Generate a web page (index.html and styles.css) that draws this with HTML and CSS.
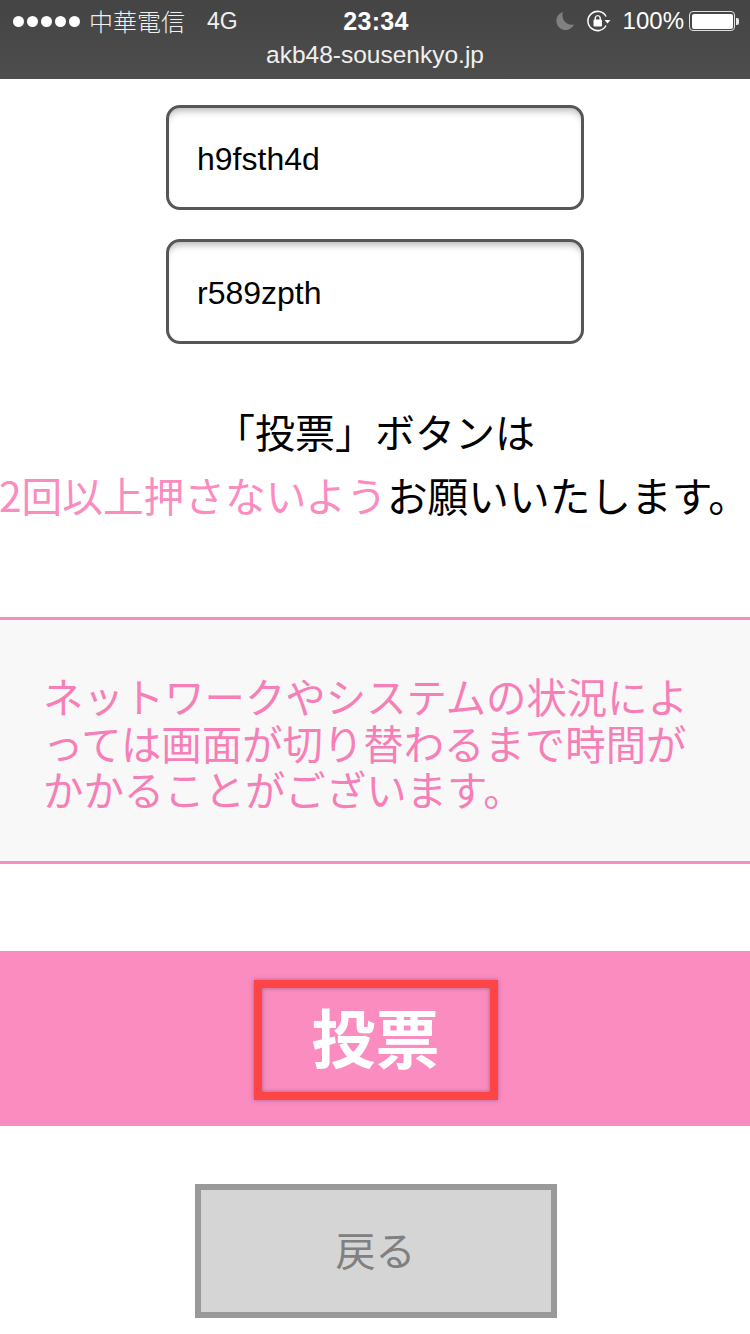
FILE: index.html
```html
<!DOCTYPE html>
<html lang="ja">
<head>
<meta charset="utf-8">
<title>akb48-sousenkyo.jp</title>
<link rel="stylesheet" href="styles.css">
</head>
<body>
<header class="statusbar">
  <div class="status-row">
    <div class="status-left">
      <span class="dots"><i></i><i></i><i></i><i></i><i></i></span>
      <span class="carrier">中華電信</span>
      <span class="network">4G</span>
    </div>
    <div class="clock">23:34</div>
    <div class="status-right">
      <svg class="moon" width="20" height="20" viewBox="0 0 20 20"><path d="M8 1 A9.2 9.2 0 1 0 19 13.5 A9.5 9.5 0 0 1 8 1 Z" fill="#808080"/></svg>
      <svg class="lock" width="24" height="22" viewBox="0 0 24 22"><path d="M19 6.5 A9.6 9.6 0 1 0 19 15.5" fill="none" stroke="#fff" stroke-width="1.5"/><path d="M17.5 10 H23.5 L20.5 13.5 Z" fill="#fff"/><rect x="6.5" y="9.5" width="8.5" height="7" rx="1" fill="#fff"/><path d="M8.3 10 V7.6 A2.5 2.5 0 0 1 13.2 7.6 V10" fill="none" stroke="#fff" stroke-width="1.4"/></svg>
      <span class="percent">100%</span>
      <div class="battery"><div class="battery-fill"></div></div><div class="battery-tip"></div>
    </div>
  </div>
  <div class="url">akb48-sousenkyo.jp</div>
</header>
<main>
  <div class="fields">
    <div class="field">h9fsth4d</div>
    <div class="field">r589zpth</div>
  </div>
  <div class="notice">
    <p class="notice-line">「投票」ボタンは</p>
    <p class="notice-line notice-wide"><span class="pink">2回以上押さないよう</span>お願いいたします。</p>
  </div>
  <section class="panel">
    <p>ネットワークやシステムの状況によ<br>っては画面が切り替わるまで時間が<br>かかることがございます。</p>
  </section>
  <div class="vote-band">
    <button class="vote-btn" type="button">投票</button>
  </div>
  <div class="back-wrap">
    <button class="back-btn" type="button">戻る</button>
  </div>
</main>
</body>
</html>
```
FILE: styles.css
```css
* { box-sizing: border-box; }
html, body { margin: 0; padding: 0; background: #fff; }
body {
  width: 750px;
  height: 1334px;
  overflow: hidden;
  font-family: "Liberation Sans", "Noto Sans CJK JP", sans-serif;
}
.statusbar {
  height: 79px;
  background: linear-gradient(#444444, #4d4d4d);
  color: #fff;
  display: flex;
  flex-direction: column;
  padding-top: 6px;
}
.status-row {
  height: 30px;
  display: grid;
  grid-template-columns: 1fr auto 1fr;
  align-items: center;
  padding: 0 11px 0 13px;
}
.status-left { display: flex; align-items: center; color: #f0f0f0; }
.dots { display: flex; gap: 3px; margin-right: 9px; }
.dots i { width: 11px; height: 11px; border-radius: 50%; background: #fff; display: block; }
.carrier { font-family: "Noto Sans CJK TC", "Noto Sans CJK JP", sans-serif; font-weight: 300; font-size: 24px; line-height: 30px; }
.network { margin-left: 22px; font-size: 23px; }
.clock { font-size: 25px; font-weight: 700; letter-spacing: .3px; }
.status-right { display: flex; align-items: center; justify-content: flex-end; }
.moon { margin-right: 12px; }
.lock { margin-right: 12px; }
.percent { font-size: 24px; margin-right: 5px; }
.battery { width: 46px; height: 20px; border: 1px solid #e0e0e0; border-radius: 4px; padding: 1.5px; }
.battery-fill { width: 100%; height: 100%; background: #fff; border-radius: 2px; }
.battery-tip { width: 3px; height: 7px; background: #e8e8e8; border-radius: 0 2px 2px 0; margin-left: 1px; }
.url { text-align: center; font-size: 24.5px; line-height: 26px; margin-top: 6px; color: #f0f0f0; }

.fields { display: flex; flex-direction: column; align-items: center; gap: 29px; padding-top: 26px; }
.field {
  width: 418px;
  height: 105px;
  border: 3px solid #565656;
  border-radius: 14px;
  padding: 3px 0 0 28px;
  display: flex;
  align-items: center;
  font-size: 32px;
  color: #000;
  box-shadow: inset 0 7px 7px -4px rgba(0,0,0,.28);
}
.notice {
  margin-top: 55px;
  font-family: "Noto Sans CJK JP", sans-serif;
  font-weight: 400;
  font-size: 40px;
  line-height: 64px;
  color: #000;
}
.notice-line { margin: 0; text-align: center; white-space: nowrap; }
.notice-wide { margin-left: -2px; font-size: 40.7px; }
.pink { color: #fb8cc0; }
.panel {
  margin-top: 90px;
  height: 247px;
  background: #f8f8f8;
  border-top: 3px solid #f48fbf;
  border-bottom: 3px solid #f48fbf;
  padding: 53px 0 0 43px;
}
.panel p {
  margin: 0;
  white-space: nowrap;
  font-family: "Noto Sans CJK JP", sans-serif;
  font-weight: 400;
  font-size: 40.4px;
  line-height: 46.5px;
  color: #f77fb7;
}
.vote-band {
  margin-top: 87px;
  height: 175px;
  background: #fb8cc0;
  display: flex;
  justify-content: center;
  padding: 29px 0 0 1px;
}
.vote-btn {
  width: 244px;
  height: 120px;
  background: transparent;
  border: 8px solid #fd4545;
  box-shadow: 0 0 4px rgba(90,60,90,.55), inset 0 0 4px rgba(90,60,90,.55);
  color: #fff;
  font-family: "Noto Sans CJK JP", sans-serif;
  font-weight: 700;
  font-size: 64px;
  line-height: 1;
  padding: 0 0 10px;
}
.back-wrap { display: flex; justify-content: center; padding: 58px 0 0 1px; }
.back-btn {
  width: 362px;
  height: 134px;
  background: #d5d5d5;
  border: 6px solid #999;
  color: #808080;
  font-family: "Noto Sans CJK JP", sans-serif;
  font-weight: 400;
  font-size: 40px;
  line-height: 1;
  padding: 0 0 4px;
}
```
